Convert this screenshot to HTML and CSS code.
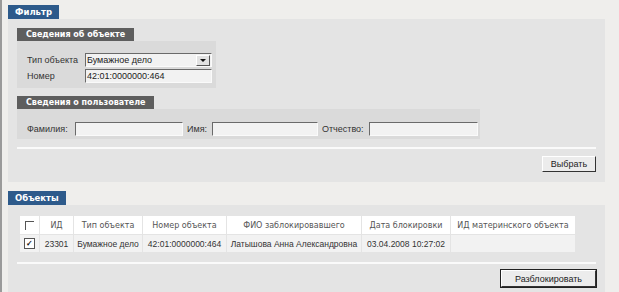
FILE: index.html
```html
<!DOCTYPE html>
<html lang="ru">
<head>
  <meta charset="UTF-8" />
  <title>Разблокировка объектов</title>
  <link rel="stylesheet" href="styles.css">
</head>
<body>
  <div class="page">
    <!-- Фильтр -->
    <div class="section">
      <div class="tab">Фильтр</div>
      <div class="panel filter-panel">
        <div class="subtab">Сведения об объекте</div>
        <div class="subpanel object-panel">
          <div class="form-row">
            <label class="label label-wide">Тип объекта</label>
            <div class="select">
              <span class="select-value">Бумажное дело</span>
              <span class="select-btn"><span class="arrow"></span></span>
            </div>
          </div>
          <div class="form-row">
            <label class="label label-wide">Номер</label>
            <div class="input input-number">42:01:0000000:464</div>
          </div>
        </div>

        <div class="subtab subtab-user">Сведения о пользователе</div>
        <div class="subpanel user-panel">
          <label class="label label-last">Фамилия:</label>
          <div class="input input-last"></div>
          <label class="label label-first">Имя:</label>
          <div class="input input-first"></div>
          <label class="label label-middle">Отчество:</label>
          <div class="input input-middle"></div>
        </div>

        <hr class="divider" />
        <div class="actions">
          <button class="btn btn-select">Выбрать</button>
        </div>
      </div>
    </div>

    <!-- Объекты -->
    <div class="section section-objects">
      <div class="tab">Объекты</div>
      <div class="panel objects-panel">
        <table class="grid">
          <colgroup>
            <col class="c-check">
            <col class="c-id">
            <col class="c-type">
            <col class="c-num">
            <col class="c-fio">
            <col class="c-date">
            <col class="c-parent">
          </colgroup>
          <tr class="head">
            <th><span class="checkbox checkbox-head"></span></th>
            <th>ИД</th>
            <th>Тип объекта</th>
            <th>Номер объекта</th>
            <th>ФИО заблокировавшего</th>
            <th>Дата блокировки</th>
            <th>ИД материнского объекта</th>
          </tr>
          <tr class="row">
            <td><span class="checkbox checked">&#10003;</span></td>
            <td>23301</td>
            <td>Бумажное дело</td>
            <td>42:01:0000000:464</td>
            <td>Латышова Анна Александровна</td>
            <td>03.04.2008 10:27:02</td>
            <td></td>
          </tr>
        </table>
        <hr class="divider divider-objects" />
        <div class="actions">
          <button class="btn btn-unlock">Разблокировать</button>
        </div>
      </div>
    </div>
  </div>
</body>
</html>
```

FILE: styles.css
```css
/* общие */
body {
  margin: 0;
  background: #efeeec;
  font-family: "Liberation Sans", Arial, sans-serif;
  font-size: 9px;
  color: #333;
}
.page {
  border-left: 2px solid #9a9a9a;
  padding: 5px 0 0 6px;
  height: 287px;
  overflow: hidden;
}

/* секции с вкладкой */
.section {
  width: 597px;
}
.section-objects {
  margin-top: 9px;
}
.tab {
  display: inline-block;
  background: #2d5a8b;
  color: #fff;
  font-family: "DejaVu Sans", Verdana, sans-serif;
  font-weight: bold;
  font-size: 8.5px;
  height: 14px;
  line-height: 14px;
  padding: 0 7px;
}
.panel {
  background: #e4e4e4;
  padding: 9px;
}
.filter-panel {
  height: 145px;
}

/* подвкладки */
.subtab {
  display: inline-block;
  background: #5e5e5e;
  color: #fff;
  font-family: "DejaVu Sans", Verdana, sans-serif;
  font-weight: bold;
  font-size: 8px;
  height: 13px;
  line-height: 13px;
  padding: 0 9px;
}
.subtab-user {
  margin-top: 8px;
}
.subpanel {
  background: #dadada;
  box-sizing: border-box;
}
.object-panel {
  width: 199px;
  height: 47px;
  padding: 12px 4px 0 10px;
}
.user-panel {
  width: 463px;
  height: 30px;
  padding: 13px 0 0 10px;
  display: flex;
  align-items: flex-start;
}

/* поля */
.form-row {
  display: flex;
  align-items: center;
  margin-bottom: 2px;
}
.label {
  color: #333;
  line-height: 14px;
  white-space: nowrap;
}
.label-wide {
  width: 58px;
}
.label-last {
  width: 48px;
}
.label-first {
  width: 25px;
  margin-left: 4px;
}
.label-middle {
  width: 47px;
  margin-left: 4px;
}
.input, .select {
  box-sizing: border-box;
  height: 14px;
  background: #f2f2f2;
  border-top: 1px solid #6a6a6a;
  border-left: 1px solid #6a6a6a;
  border-right: 1px solid #fafafa;
  border-bottom: 1px solid #fafafa;
  line-height: 12px;
  padding-left: 1px;
  color: #222;
}
.select {
  width: 127px;
  display: flex;
  align-items: center;
  justify-content: space-between;
  padding-right: 1px;
}
.select-btn {
  width: 14px;
  height: 11px;
  background: #e2e2e2;
  border-top: 1px solid #fff;
  border-left: 1px solid #fff;
  border-right: 1px solid #555;
  border-bottom: 1px solid #555;
  box-sizing: border-box;
  display: flex;
  align-items: center;
  justify-content: center;
}
.arrow {
  width: 0;
  height: 0;
  border-left: 3px solid transparent;
  border-right: 3px solid transparent;
  border-top: 3px solid #111;
}
.input-number {
  width: 127px;
}
.input-last {
  width: 108px;
}
.input-first {
  width: 106px;
}
.input-middle {
  width: 109px;
}

/* разделитель и кнопки */
.divider {
  border: none;
  border-top: 2px solid #fafafa;
  margin: 8px 0 0 0;
  height: 0;
}
.actions {
  display: flex;
  justify-content: flex-end;
  margin-top: 7px;
}
.btn {
  font-family: "Liberation Sans", Arial, sans-serif;
  font-size: 9px;
  color: #222;
  background: #ececec;
  border-top: 1px solid #fff;
  border-left: 1px solid #fff;
  border-right: 1px solid #333;
  border-bottom: 1px solid #333;
  height: 16px;
  padding: 0;
}
.btn-select {
  width: 54px;
}
.btn-unlock {
  width: 95px;
  height: 17px;
  outline: 1px solid #222;
}

/* таблица объектов */
.objects-panel {
  padding-top: 10px;
  height: 80px;
}
.grid {
  table-layout: fixed;
  border-collapse: separate;
  border-spacing: 1px;
  width: 557px;
  background: #e4e4e4;
  margin-left: 2px;
}
.c-check { width: 19px; }
.c-id { width: 33px; }
.c-type { width: 68px; }
.c-num { width: 83px; }
.c-fio { width: 134px; }
.c-date { width: 88px; }
.c-parent { width: 124px; }
.grid th {
  background: #fff;
  color: #555;
  font-family: "DejaVu Sans", Verdana, sans-serif;
  font-size: 8px;
  font-weight: normal;
  height: 18px;
  padding: 0;
  white-space: nowrap;
}
.grid td {
  background: #f2f2f2;
  color: #333;
  font-size: 8.5px;
  height: 17px;
  padding: 0;
  white-space: nowrap;
  text-align: center;
}
.checkbox {
  display: inline-block;
  width: 8px;
  height: 8px;
  vertical-align: middle;
}
.checkbox-head {
  border-top: 1px solid #555;
  border-left: 1px solid #555;
}
.checked {
  width: 9px;
  height: 9px;
  border: 1px solid #555;
  background: #fff;
  font-size: 8px;
  line-height: 9px;
  text-align: center;
  color: #111;
  font-weight: bold;
}
.divider-objects {
  margin-top: 9px;
}
.objects-panel .actions {
  margin-top: 6px;
}
```
